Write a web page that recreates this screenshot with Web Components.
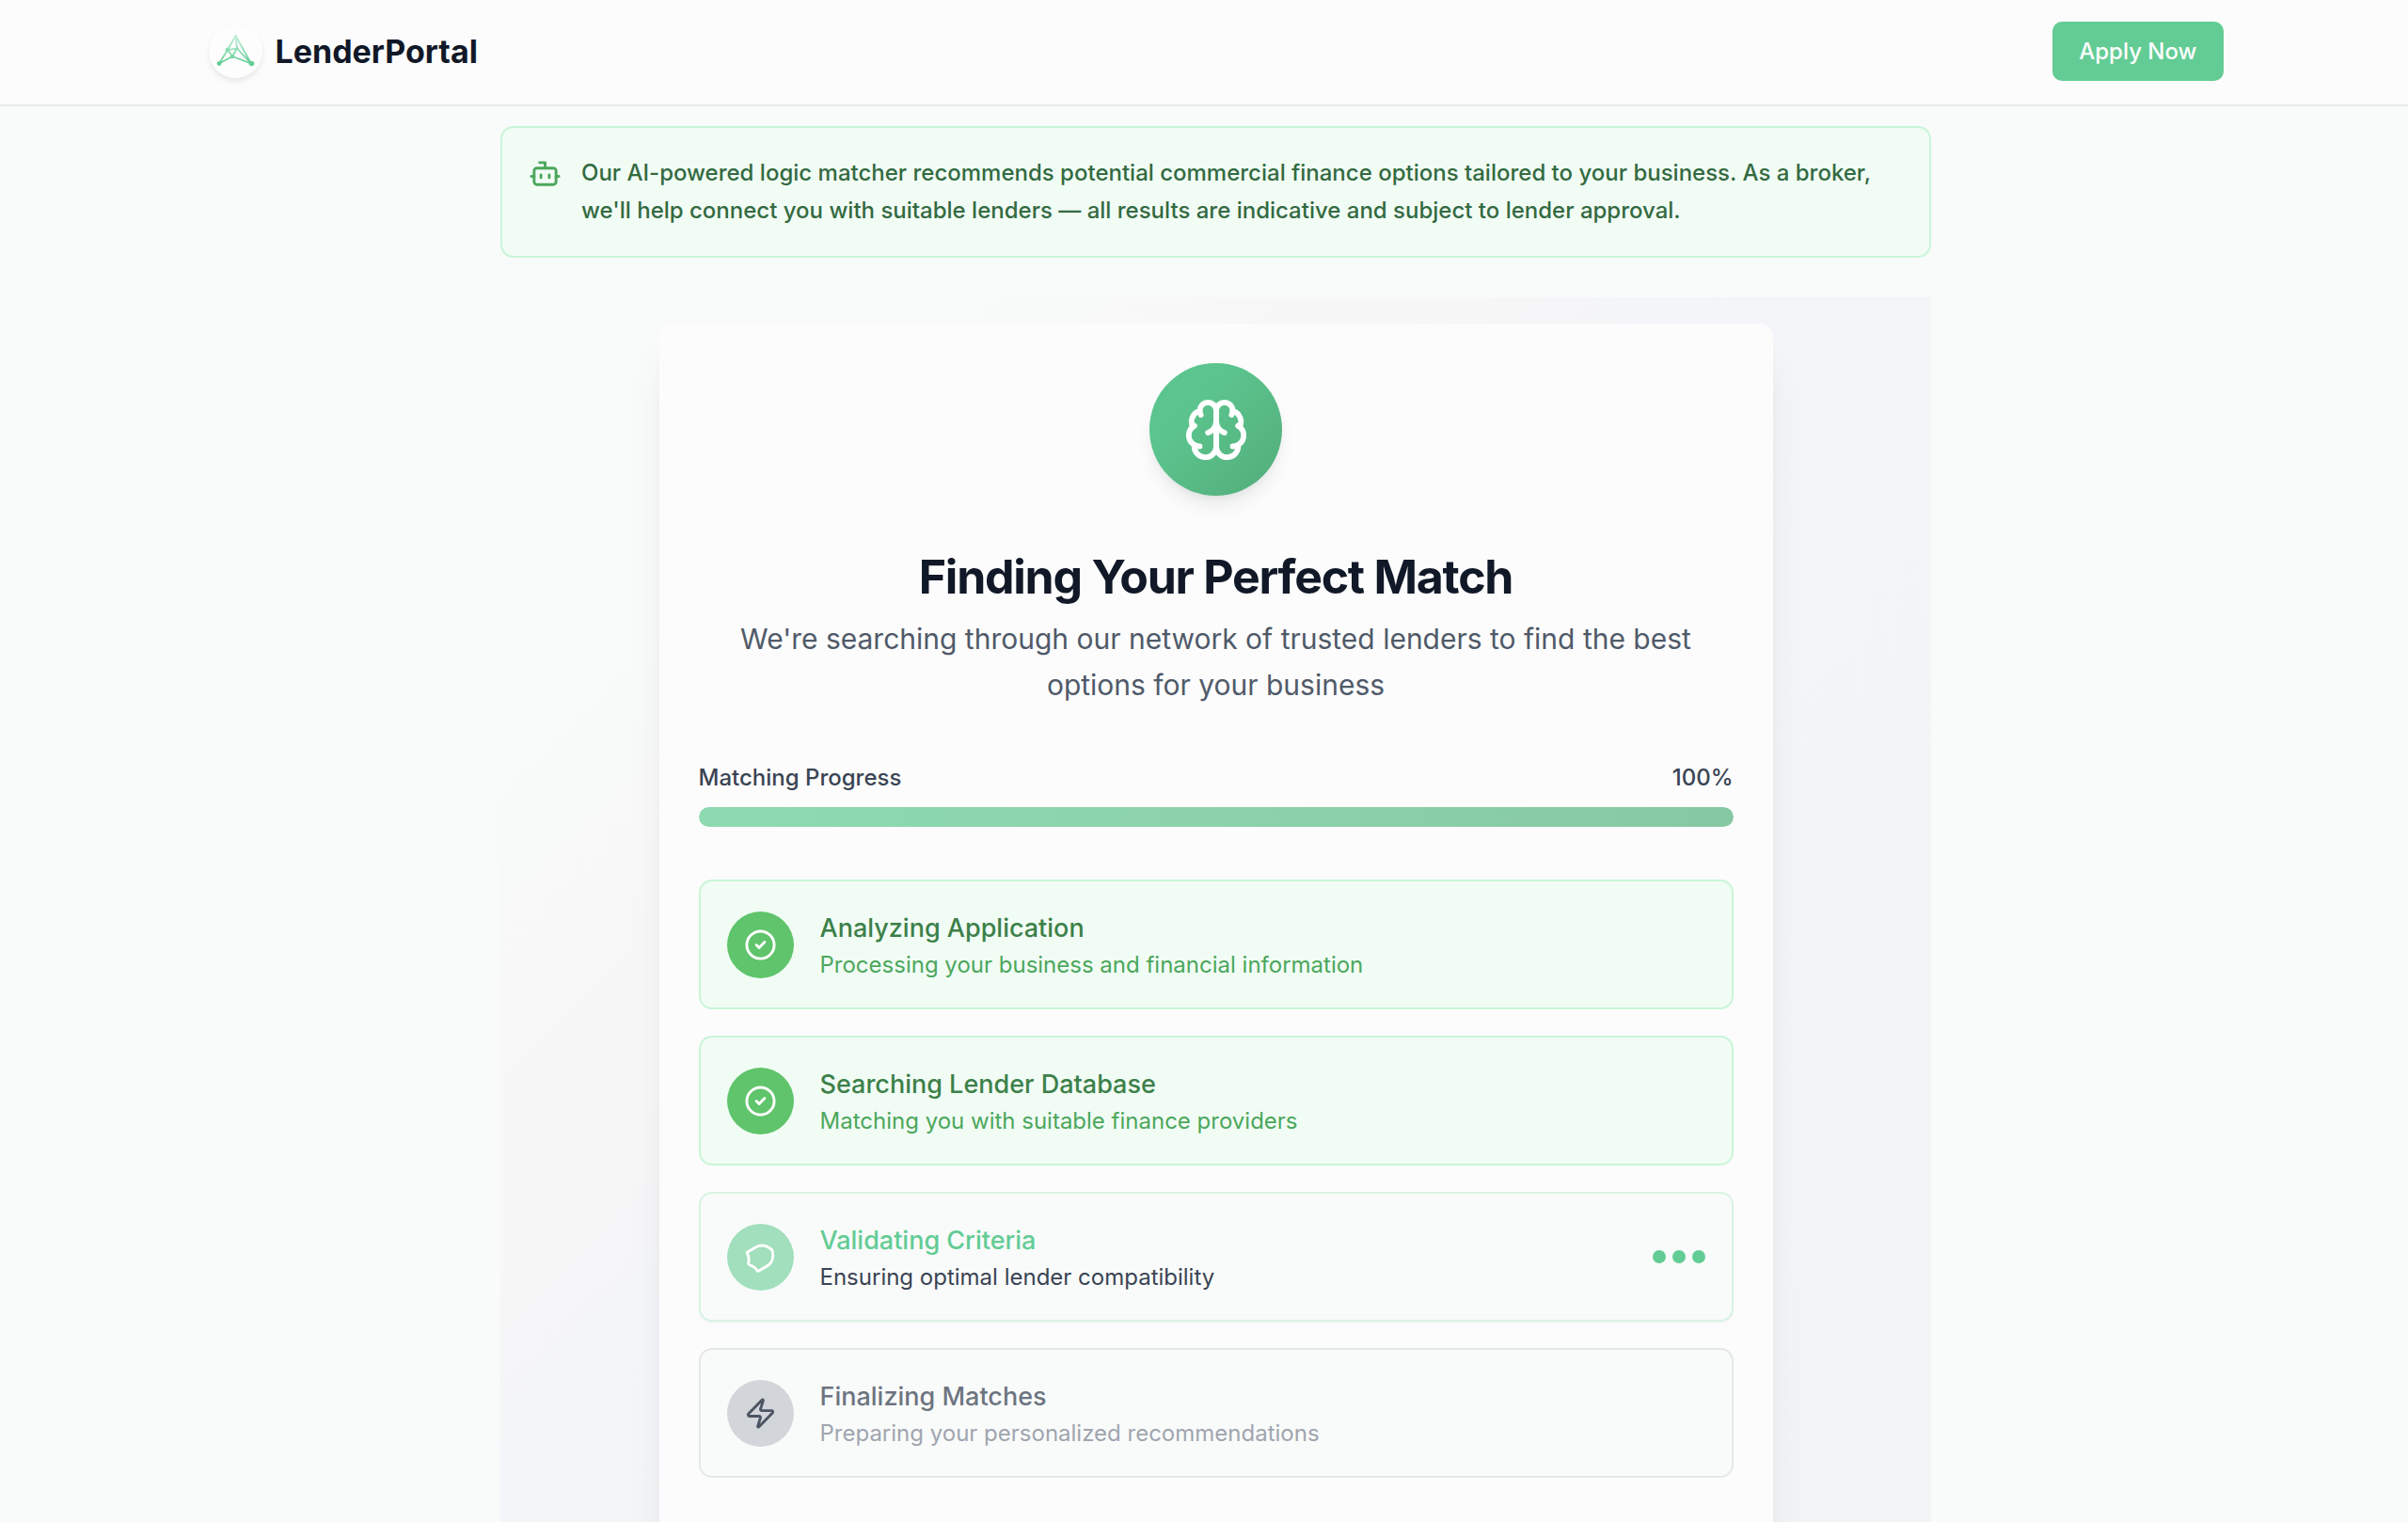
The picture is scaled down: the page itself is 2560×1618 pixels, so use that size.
<!DOCTYPE html>
<html lang="en">
<head>
<meta charset="utf-8">
<meta name="viewport" content="width=device-width, initial-scale=1">
<title>LenderPortal</title>
<style>
  html, body { margin: 0; min-height: 100%; }
  body {
    background: #f8fbf9;
    color: #111827;
    font-family: Inter, "Liberation Sans", sans-serif;
    font-size: 24px;
    overflow: hidden;
  }
</style>
</head>
<body>
<lender-app></lender-app>

<script>
const ICONS = {
  bot: '<path d="M12 8V4H8"/><rect width="16" height="12" x="4" y="8" rx="2"/><path d="M2 14h2"/><path d="M20 14h2"/><path d="M15 13v2"/><path d="M9 13v2"/>',
  brain: '<path d="M12 5a3 3 0 1 0-5.997.125 4 4 0 0 0-2.526 5.77 4 4 0 0 0 .556 6.588A4 4 0 1 0 12 18Z"/><path d="M12 5a3 3 0 1 1 5.997.125 4 4 0 0 1 2.526 5.77 4 4 0 0 1-.556 6.588A4 4 0 1 1 12 18Z"/><path d="M15 13a4.5 4.5 0 0 1-3-4 4.5 4.5 0 0 1-3 4"/><path d="M17.599 6.5a3 3 0 0 0 .399-1.375"/><path d="M6.003 5.125A3 3 0 0 0 6.401 6.5"/><path d="M3.477 10.896a4 4 0 0 1 .585-.396"/><path d="M19.938 10.5a4 4 0 0 1 .585.396"/><path d="M6 18a4 4 0 0 1-1.967-.516"/><path d="M19.967 17.484A4 4 0 0 1 18 18"/>',
  check: '<circle cx="12" cy="12" r="10"/><path d="m9 12 2 2 4-4"/>',
  shield: '<path transform="rotate(240 12 12)" d="M20 13c0 5-3.5 7.5-7.66 8.95a1 1 0 0 1-.67-.01C7.5 20.5 4 18 4 13V6a1 1 0 0 1 1-1c2 0 4.5-1.2 6.24-2.72a1.17 1.17 0 0 1 1.52 0C14.51 3.81 17 5 19 5a1 1 0 0 1 1 1z"/>',
  zap: '<path d="M4 14a1 1 0 0 1-.78-1.63l9.9-10.2a.5.5 0 0 1 .86.46l-1.92 6.02A1 1 0 0 0 13 10h7a1 1 0 0 1 .78 1.63l-9.9 10.2a.5.5 0 0 1-.86-.46l1.92-6.02A1 1 0 0 0 11 14z"/>'
};

class BaseElement extends HTMLElement {
  connectedCallback() {
    if (this.shadowRoot) return;
    this.attachShadow({ mode: 'open' }).innerHTML = this.render();
  }
}

customElements.define('line-icon', class extends BaseElement {
  render() {
    return `<style>
      :host { display: block; flex: none; width: 35px; height: 35px; }
      svg { display: block; width: 100%; height: 100%; }
    </style>
    <svg viewBox="0 0 24 24" fill="none" stroke="currentColor" stroke-width="2" stroke-linecap="round" stroke-linejoin="round" aria-hidden="true">${ICONS[this.getAttribute('name')]}</svg>`;
  }
});

customElements.define('brand-logo', class extends BaseElement {
  render() {
    return `<style>
      :host { display: block; }
      a { display: flex; align-items: center; gap: 14px; color: #111827; text-decoration: none; font-size: 34px; line-height: 50px; font-weight: 700; }
      .disc { width: 57px; height: 57px; border-radius: 50%; background: #fdfdfd; box-shadow: 0 4px 7px rgba(17,24,39,.06), 0 2px 4px rgba(17,24,39,.03); }
      svg { display: block; width: 100%; height: 100%; }
    </style>
    <a href="#">
      <span class="disc"><svg viewBox="0 0 57 57" aria-hidden="true">
        <defs><linearGradient id="g" gradientUnits="userSpaceOnUse" x1="0" y1="11" x2="0" y2="42">
          <stop offset="0" stop-color="#c6f1dc"/><stop offset=".45" stop-color="#93e0b8"/><stop offset="1" stop-color="#63cc95"/></linearGradient></defs>
        <g stroke="url(#g)" stroke-width="1.7" fill="none" stroke-linejoin="round">
          <path d="M28.5 12 20 27 11 41.500 25 34 45 41.500 28.500 12 30 25.500 45 41.500M20 27l10-1.500-5 8.500-5-7"/>
        </g>
        <g fill="url(#g)"><circle cx="28.5" cy="12.5" r="1.8"/><circle cx="20" cy="27" r="2.5"/><circle cx="30" cy="25.5" r="1.6"/><circle cx="25" cy="34" r="2.2"/><circle cx="11" cy="41.5" r="2.4"/><circle cx="45.5" cy="41.5" r="2.8"/></g>
      </svg></span>
      <span><slot></slot></span>
    </a>`;
  }
});

customElements.define('site-header', class extends BaseElement {
  render() {
    return `<style>
      :host { display: block; background: #fcfcfc; border-bottom: 2px solid #e8ebea; }
      header { display: flex; align-items: center; justify-content: space-between; max-width: 2142px; margin: 0 auto; padding: 23px 0 25px; }
      .bar { padding-left: 25px; }
      button { font-family: inherit; font-size: 24px; line-height: 35px; font-weight: 500; color: #fff; background: #63cc95; border: 0; border-radius: 10px; padding: 14px 28px; }
    </style>
    <div class="bar"><header>
      <brand-logo>LenderPortal</brand-logo>
      <button type="button">Apply Now</button>
    </header></div>`;
  }
});

customElements.define('info-notice', class extends BaseElement {
  render() {
    return `<style>
      :host { display: flex; gap: 21px; padding: 28px; border: 2px solid #c9f5d8; border-radius: 14px; background: #f1fcf5; color: #4ca75c; }
      line-icon { margin-top: 3px; }
      p { margin: 0; font-size: 24px; line-height: 40px; font-weight: 500; color: #336a41; }
    </style>
    <line-icon name="bot"></line-icon><p><slot></slot></p>`;
  }
});

customElements.define('progress-meter', class extends BaseElement {
  render() {
    const v = this.getAttribute('value');
    return `<style>
      :host { display: block; }
      .row { display: flex; justify-content: space-between; font-size: 24px; line-height: 35px; font-weight: 500; color: #3a4454; margin-bottom: 14px; }
      .track { height: 21px; border-radius: 11px; background: #e5e7eb; overflow: hidden; }
      .fill { height: 100%; border-radius: 11px; width: ${v}%; background: linear-gradient(90deg, #8ddab1, #8cd2ac 50%, #86c8a2); }
    </style>
    <div class="row"><span id="l"><slot></slot></span><span>${v}%</span></div>
    <div class="track" role="progressbar" aria-labelledby="l" aria-valuenow="${v}" aria-valuemin="0" aria-valuemax="100"><div class="fill"></div></div>`;
  }
});

customElements.define('bounce-dots', class extends BaseElement {
  render() {
    return `<style>
      :host { display: flex; gap: 7px; }
      i { width: 14px; height: 14px; border-radius: 50%; background: #63cc95; animation: bounce 1s linear infinite paused; }
      i:nth-child(1) { animation-delay: -.4s; }
      i:nth-child(2) { animation-delay: -.3s; }
      i:nth-child(3) { animation-delay: -.2s; }
      @keyframes bounce { 0%, 100% { transform: none; } 50% { transform: translateY(-5px); } }
    </style><i></i><i></i><i></i>`;
  }
});

customElements.define('match-step', class extends BaseElement {
  render() {
    const state = this.getAttribute('state');
    return `<style>
      :host { display: flex; align-items: center; gap: 28px; padding: 28px; border: 2px solid #e4e7ea; border-radius: 14px; background: #f9fbfa; --disc: #d2d5da; --ink: #4b5563; --title: #6d7480; --sub: #a0a5af; }
      :host([state=done]) { background: #f1fcf5; border-color: #c9f5d8; --disc: #5fc46b; --ink: #fff; --title: #3c8049; --sub: #4ca75c; }
      :host([state=active]) { border-color: #d8f3e3; box-shadow: 0 2px 3px rgba(17,24,39,.03); --disc: #a1dfbd; --ink: #fff; --title: #63cc95; --sub: #3a4454; }
      .disc { display: grid; place-items: center; flex: none; width: 71px; height: 71px; border-radius: 50%; background: var(--disc); color: var(--ink); }
      .copy { flex: 1; }
      h3 { margin: 0; font-size: 27px; line-height: 43px; font-weight: 500; color: var(--title); }
      p { margin: 0; font-size: 24px; line-height: 35px; color: var(--sub); }
    </style>
    <div class="disc"><line-icon name="${this.getAttribute('icon')}"></line-icon></div>
    <div class="copy"><h3><slot name="title"></slot></h3><p><slot></slot></p></div>
    ${state === 'active' ? '<bounce-dots></bounce-dots>' : ''}`;
  }
});

customElements.define('match-card', class extends BaseElement {
  render() {
    return `<style>
      :host { display: block; max-width: 1184px; box-sizing: border-box; margin: 0 auto; padding: 42px 42px 64px; border-radius: 14px; background: #fcfcfc; box-shadow: 0 35px 44px -9px rgba(17,24,39,.08), 0 14px 18px -11px rgba(17,24,39,.08); }
      .badge { display: grid; place-items: center; width: 141px; height: 141px; margin: 0 auto 56px; border-radius: 50%; color: #fff; background: linear-gradient(135deg, #5cc58f 30%, #54b07c 90%); box-shadow: 0 14px 20px -4px rgba(17,24,39,.08), 0 5px 9px -3px rgba(17,24,39,.06); }
      .badge line-icon { width: 70px; height: 70px; }
      h1 { margin: 0 0 12px; text-align: center; font-size: 50px; line-height: 60px; font-weight: 700; letter-spacing: -0.025em; }
      .lead { margin: 0; text-align: center; font-size: 30px; line-height: 49px; color: #505a69; }
      progress-meter { margin-top: 56px; }
      .steps { display: grid; gap: 28px; margin-top: 56px; }
    </style>
    <div class="badge"><line-icon name="brain"></line-icon></div>
    <h1>Finding Your Perfect Match</h1>
    <p class="lead">We're searching through our network of trusted lenders to find the best options for your business</p>
    <progress-meter value="100">Matching Progress</progress-meter>
    <div class="steps">
      <match-step state="done" icon="check"><span slot="title">Analyzing Application</span>Processing your business and financial information</match-step>
      <match-step state="done" icon="check"><span slot="title">Searching Lender Database</span>Matching you with suitable finance providers</match-step>
      <match-step state="active" icon="shield"><span slot="title">Validating Criteria</span>Ensuring optimal lender compatibility</match-step>
      <match-step state="pending" icon="zap"><span slot="title">Finalizing Matches</span>Preparing your personalized recommendations</match-step>
    </div>`;
  }
});

customElements.define('lender-app', class extends BaseElement {
  render() {
    return `<style>
      :host { display: block; }
      main { padding: 21px 0 0 25px; }
      .column { max-width: 1521px; margin: 0 auto; }
      .stage { margin-top: 42px; padding: 28px 0; background: linear-gradient(135deg, #f8fbf9 18%, #f7f7f7 29%, #f7f7f7 35%, #f4f5f8 43%, #f2f3f5); }
    </style>
    <site-header></site-header>
    <main><div class="column">
      <info-notice>Our AI-powered logic matcher recommends potential commercial finance options tailored to your business. As a broker, we'll help connect you with suitable lenders — all results are indicative and subject to lender approval.</info-notice>
      <div class="stage"><match-card></match-card></div>
    </div></main>`;
  }
});
</script>
</body>
</html>
